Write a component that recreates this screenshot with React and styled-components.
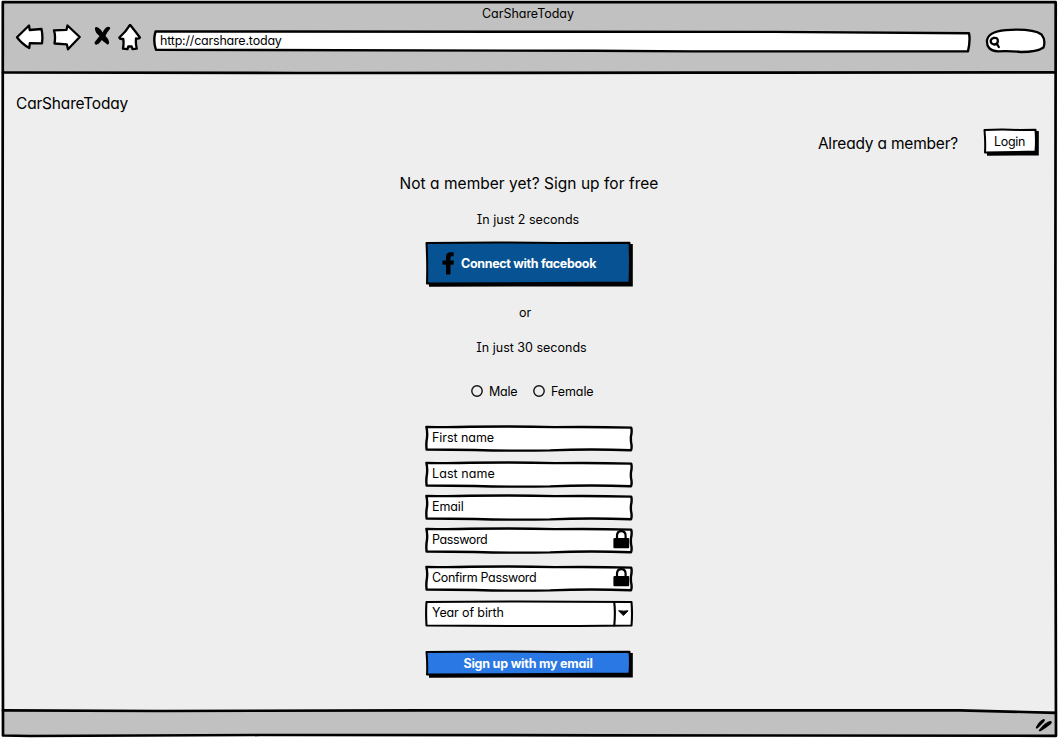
import React from 'react';
import styled, { createGlobalStyle } from 'styled-components';

const GlobalStyle = createGlobalStyle`
  *, *::before, *::after { box-sizing: border-box; }
  body {
    margin: 0;
    background: #fff;
    color: #000;
    font-family: Inter, "Open Sans", sans-serif;
    font-feature-settings: "cv11" 1, "cv08" 1;
    overflow: hidden;
  }
`;

const Window = styled.div`
  position: relative;
  display: flex;
  flex-direction: column;
  width: 1058px;
  height: 738px;
  padding: 2px 2px 2px 3px;
`;

const Outline = styled.svg`
  position: absolute;
  inset: 0;
  width: 100%;
  height: 100%;
  overflow: visible;
  pointer-events: none;
  fill: none;
  stroke: #000;
  stroke-width: ${(p) => p.$weight || 2.4};
  stroke-linejoin: round;
  stroke-linecap: round;
`;

const Text = styled.span`
  position: relative;
  font-size: ${(p) => p.$size || 12.5}px;
  font-weight: ${(p) => p.$weight || 430};
  line-height: 20px;
  letter-spacing: ${(p) => p.$track || 0}px;
  color: ${(p) => p.$color || '#000'};
  white-space: nowrap;
`;

const Header = styled.header`
  display: flex;
  flex-direction: column;
  height: 71px;
  padding-top: 2px;
  background: #c1c1c1;
`;

const TitleRow = styled.div`
  display: flex;
  height: 20px;
  padding-left: 479px;
`;

const Toolbar = styled.div`
  display: flex;
  align-items: center;
  height: 30px;
  padding-left: 12px;
`;

const ToolIcon = styled.svg`
  flex: none;
  width: ${(p) => p.$w}px;
  height: 30px;
  margin-right: ${(p) => p.$gap}px;
  fill: #fff;
  stroke: #000;
  stroke-width: 2.3;
  stroke-linejoin: round;
  stroke-linecap: round;
`;

const AddressBar = styled.div`
  position: relative;
  display: flex;
  align-items: center;
  width: 818px;
  height: 24px;
  margin: 5px 13.5px 0 0;
  padding: 0 0 1px 7px;
`;

const SearchBox = styled.div`
  position: relative;
  width: 61px;
  height: 26px;
  margin-top: 4px;
`;

const Body = styled.main`
  display: flex;
  flex-direction: column;
  height: 638px;
  padding-top: 21px;
  background: #eee;
`;

const Brand = styled.div`
  display: flex;
  height: 20px;
  padding-left: 13px;
`;

const MemberRow = styled.div`
  display: flex;
  justify-content: flex-end;
  align-items: flex-start;
  gap: 25px;
  height: 28px;
  margin-top: 14px;
  padding-right: 17px;
`;

const MemberPrompt = styled.div`
  display: flex;
  padding-top: 6px;
`;

const Button = styled.button`
  position: relative;
  display: flex;
  align-items: center;
  justify-content: ${(p) => p.$justify || 'center'};
  width: ${(p) => p.$w}px;
  height: ${(p) => p.$h}px;
  margin-top: ${(p) => p.$top || 0}px;
  padding: ${(p) => p.$pad || '0'};
  border: 0;
  background: none;
  font-family: inherit;
  font-feature-settings: inherit;
`;

const SignUp = styled.form`
  display: flex;
  flex-direction: column;
  align-items: center;
  width: 264px;
  margin: 18px 0 0 394px;
`;

const Line = styled.div`
  display: flex;
  justify-content: center;
  width: 100%;
  height: 20px;
  margin-top: ${(p) => p.$top || 0}px;
  padding-left: ${(p) => p.$left || 0}px;
  padding-right: ${(p) => p.$right || 0}px;
`;

const Radios = styled.div`
  display: flex;
  width: 128px;
  height: 20px;
  margin: 23px 0 0 12px;
`;

const Option = styled.label`
  display: flex;
  align-items: center;
  width: ${(p) => p.$w}px;
  gap: 6px;
`;

const RadioLabel = styled.span`
  display: flex;
  padding-top: 2px;
`;

const RadioRing = styled.svg`
  flex: none;
  width: 12px;
  height: 12px;
  fill: none;
  stroke: #111;
  stroke-width: 1.4;
`;

const FieldBox = styled.div`
  position: relative;
  display: flex;
  align-items: center;
  justify-content: space-between;
  width: 208px;
  height: ${(p) => p.$h || 27}px;
  margin-top: ${(p) => p.$top}px;
  padding: 0 3px ${(p) => p.$bottom || 1}px 7px;
`;

const LockIcon = styled.svg`
  position: relative;
  width: 17px;
  height: 20px;
  margin-bottom: 3px;
`;

const Footer = styled.footer`
  display: flex;
  justify-content: flex-end;
  height: 25px;
  padding-right: 2px;
  background: #c1c1c1;
`;

const Grip = styled.svg`
  width: 20px;
  height: 16px;
  margin-top: 6px;
  fill: #000;
`;

const FacebookMark = styled.svg`
  position: relative;
  flex: none;
  width: 12px;
  height: 23px;
  margin-right: 7px;
`;

function SketchButton({ w, h, fill, children, ...rest }) {
  const r = w - 3;
  const b = h - 3;
  return (
    <Button type="button" $w={w} $h={h} {...rest}>
      <Outline $weight={2} viewBox={`0 0 ${w} ${h}`}>
        <path d={`M4 ${b} L4 ${h - 0.3} L${w - 0.2} ${h - 0.5} L${w - 0.2} 3 L${r} 3 Z`} fill="#000" stroke="none" />
        <path
          d={`M1.5 2 Q${w * 0.35} 1.2 ${w * 0.65} 2 L${r - 0.5} 1.8 Q${r + 0.4} ${h / 2} ${r - 0.5} ${b - 1.4} L${w * 0.6} ${b - 1} L2 ${b - 0.4} Q2.6 ${h / 2} 1.5 2 Z`}
          fill={fill}
        />
      </Outline>
      {children}
    </Button>
  );
}

function Radio({ w, label, track }) {
  return (
    <Option $w={w}>
      <RadioRing viewBox="0 0 12 12">
        <circle cx="6" cy="6" r="5.2" />
      </RadioRing>
      <RadioLabel>
        <Text $track={track}>{label}</Text>
      </RadioLabel>
    </Option>
  );
}

function Lock() {
  return (
    <LockIcon viewBox="0 0 17 20">
      <path d="M4 10V6.800C4 3.600 5.700 2.200 8.300 2.200s4.300 1.400 4.300 4.600V10" fill="none" stroke="#000" strokeWidth="2.200" />
      <path d="M1.700 9h13.400q1.100 0 1.100 1v8.200q0 1-1 1H1.400q-1 0-1-1v-8q0-1.200 1.300-1.200z" fill="#000" />
    </LockIcon>
  );
}

function Field({ label, top, track, lock }) {
  return (
    <FieldBox $top={top}>
      <Outline viewBox="0 0 208 27">
        <path
          d="M1.400 1.900 Q25 2.300 45 1.800 Q95 1.200 130 2.100 Q170 1.600 206.200 2.600 Q207.200 6 206 11 Q205.600 16 206.400 19 Q207 23 206 25.300 Q165 23.600 125 25.400 Q85 26 50 25 L1.600 24.500 Q.9 18 2 13 Q2.600 7 1.400 1.900Z"
          fill="#fff"
        />
      </Outline>
      <Text $track={track}>{label}</Text>
      {lock && <Lock />}
    </FieldBox>
  );
}

export default function App() {
  return (
    <>
      <GlobalStyle />
      <Window>
        <Header>
          <TitleRow>
            <Text $track={-0.03}>CarShareToday</Text>
          </TitleRow>
          <Toolbar>
            <ToolIcon $w={30} $gap={6} viewBox="0 0 30 30">
              <path d="M2 13.200 L14 1.500 L14.700 6 L26.500 5 Q28 12 27 19.400 L14.800 19.200 L14.300 24 Q7 20 2 13.200Z" />
            </ToolIcon>
            <ToolIcon $w={30} $gap={12.5} viewBox="0 0 30 30">
              <path d="M3 6.300 L15.500 5.800 L16.500 1.500 L28.700 13 L17 25.300 L15.800 20.300 L3.500 19.500 Q4.800 12 3 6.300Z" />
            </ToolIcon>
            <ToolIcon $w={17} $gap={7.5} viewBox="0 0 17 30">
              <path d="M1 4 Q1.500 2.500 4 3.500 Q7 5.300 8.500 8.500 Q11 3.500 14 2.800 Q17.500 2.800 15.500 5.500 Q12.500 9 11.500 12 Q15.500 16 15 19 Q14.500 22 11.500 19 Q8.500 17 7.800 16 Q4 21.500 1.500 20.500 Q-.6 19 2 16.500 L5.500 12 Q.5 8 1 4Z" fill="#000" stroke="none" />
            </ToolIcon>
            <ToolIcon $w={24} $gap={11} viewBox="0 0 24 30">
              <path d="M12 .8 Q17 7 21.900 13.500 Q21 14.800 18 14.500 Q17.500 20 18.800 24.700 L14.500 25.200 L13.700 22.500 L10.300 22.300 L9.500 25.200 L5 24.700 Q6 19 5.200 14.800 Q2 15.500 1.300 13.500 Q8 7.500 12 .8Z" />
            </ToolIcon>
            <AddressBar>
              <Outline viewBox="0 0 818 24">
                <path d="M2.500 1.500 L420 1.800 L620 1.900 L816 3.200 Q817.500 10 815 21.200 L540 21.400 L440 20.800 L3 19.800 Q-.2 11 2.500 1.500Z" fill="#fff" />
              </Outline>
              <Text $track={-0.2}>http://carshare.today</Text>
            </AddressBar>
            <SearchBox>
              <Outline $weight={2.300} viewBox="0 0 61 26">
                <path d="M2 12 Q4 2.200 26 1.800 Q49 1 56.500 6.500 Q61 12 58.500 19.500 Q52 24 36 24 Q25 22.700 13 23.300 Q1 22.500 2 12Z" fill="#fff" />
                <path d="M8.300 10 Q13.300 9 12.800 13.500 Q12.300 16.700 9 16.500 Q5.200 15.500 5.700 12.500 Q6.500 10.500 8.300 10Z M12 16 L13.800 19" />
              </Outline>
            </SearchBox>
          </Toolbar>
        </Header>

        <Body>
          <Brand>
            <Text $size={15.5} $track={-0.18}>CarShareToday</Text>
          </Brand>
          <MemberRow>
            <MemberPrompt>
              <Text $size={15.5} $track={-0.2}>Already a member?</Text>
            </MemberPrompt>
            <SketchButton w={56} h={28} fill="#fff" $pad="0 3px 1px 0">
              <Text $track={-0.3}>Login</Text>
            </SketchButton>
          </MemberRow>

          <SignUp>
            <Line>
              <Text $size={15.5} $track={0.03}>Not a member yet? Sign up for free</Text>
            </Line>
            <Line $top={16} $right={2}>
              <Text>In just 2 seconds</Text>
            </Line>
            <SketchButton w={208} h={46} fill="#075293" $top={11} $justify="flex-start" $pad="0 0 1px 17px">
              <FacebookMark viewBox="0 0 12 23">
                <path d="M4 22.500 V12.700 H.5 V8.500 H4 V5 Q4 .3 8.500 .3 H11.700 V4.300 H9.800 Q8.500 4.300 8.500 6 V8.500 H12 L11.500 12.700 H8.500 V22.500Z" />
              </FacebookMark>
              <Text $weight={650} $track={-0.33} $color="#fff">Connect with facebook</Text>
            </SketchButton>
            <Line $top={16} $right={8}>
              <Text>or</Text>
            </Line>
            <Line $top={15} $left={5}>
              <Text>In just 30 seconds</Text>
            </Line>
            <Radios>
              <Radio w={62} label="Male" track={-0.2} />
              <Radio w={66} label="Female" track={-0.1} />
            </Radios>
            <Field top={24} label="First name" track={-0.05} />
            <Field top={9} label="Last name" track={0.08} />
            <Field top={6} label="Email" track={-0.1} />
            <Field top={6} label="Password" track={-0.38} lock />
            <Field top={11} label="Confirm Password" track={-0.32} lock />
            <FieldBox $top={8} $h={28} $bottom={3}>
              <Outline $weight={2.100} viewBox="0 0 208 28">
                <path d="M1.500 2 Q80 1 206.500 2 Q207.500 14 206.500 25.500 Q100 26.500 1.500 25.500 Q.7 12 1.500 2Z" fill="#fff" />
                <path d="M189.200 2 Q190.500 12 189.300 25.500" />
                <path d="M194 10.800 Q199 11.500 203 10.800 L198.600 15.300Z" fill="#000" strokeWidth="1" />
              </Outline>
              <Text $track={-0.12}>Year of birth</Text>
            </FieldBox>
            <SketchButton w={208} h={28} fill="#2a78e4" $top={22} $pad="0 2px 0 0">
              <Text $weight={650} $track={-0.2} $color="#fff">Sign up with my email</Text>
            </SketchButton>
          </SignUp>
        </Body>

        <Footer>
          <Grip viewBox="0 0 20 16">
            <path d="M2 10 Q5 4 9.500 2 Q12 2 10 5 Q6 9 4 11 Q1 12.500 2 10Z M5 13 Q11 5 16 4 Q19 4 17 7 Q12 11 7 14 Q4 15 5 13Z" />
          </Grip>
        </Footer>

        <Outline $weight={2.700} viewBox="0 0 1058 738">
          <path d="M2.800 2.200 L1055.700 2.200 L1055.300 400 L1056 735.800 L600 735.300 L260 735 L30 736 L3 735.500 L2.500 400Z" />
          <path d="M3 72.500 L300 73 L700 72.600 L1055 72.300" />
          <path d="M3 710.400 L160 711 L420 710.300 L960 710.300 L1055 712.800" />
        </Outline>
      </Window>
    </>
  );
}
